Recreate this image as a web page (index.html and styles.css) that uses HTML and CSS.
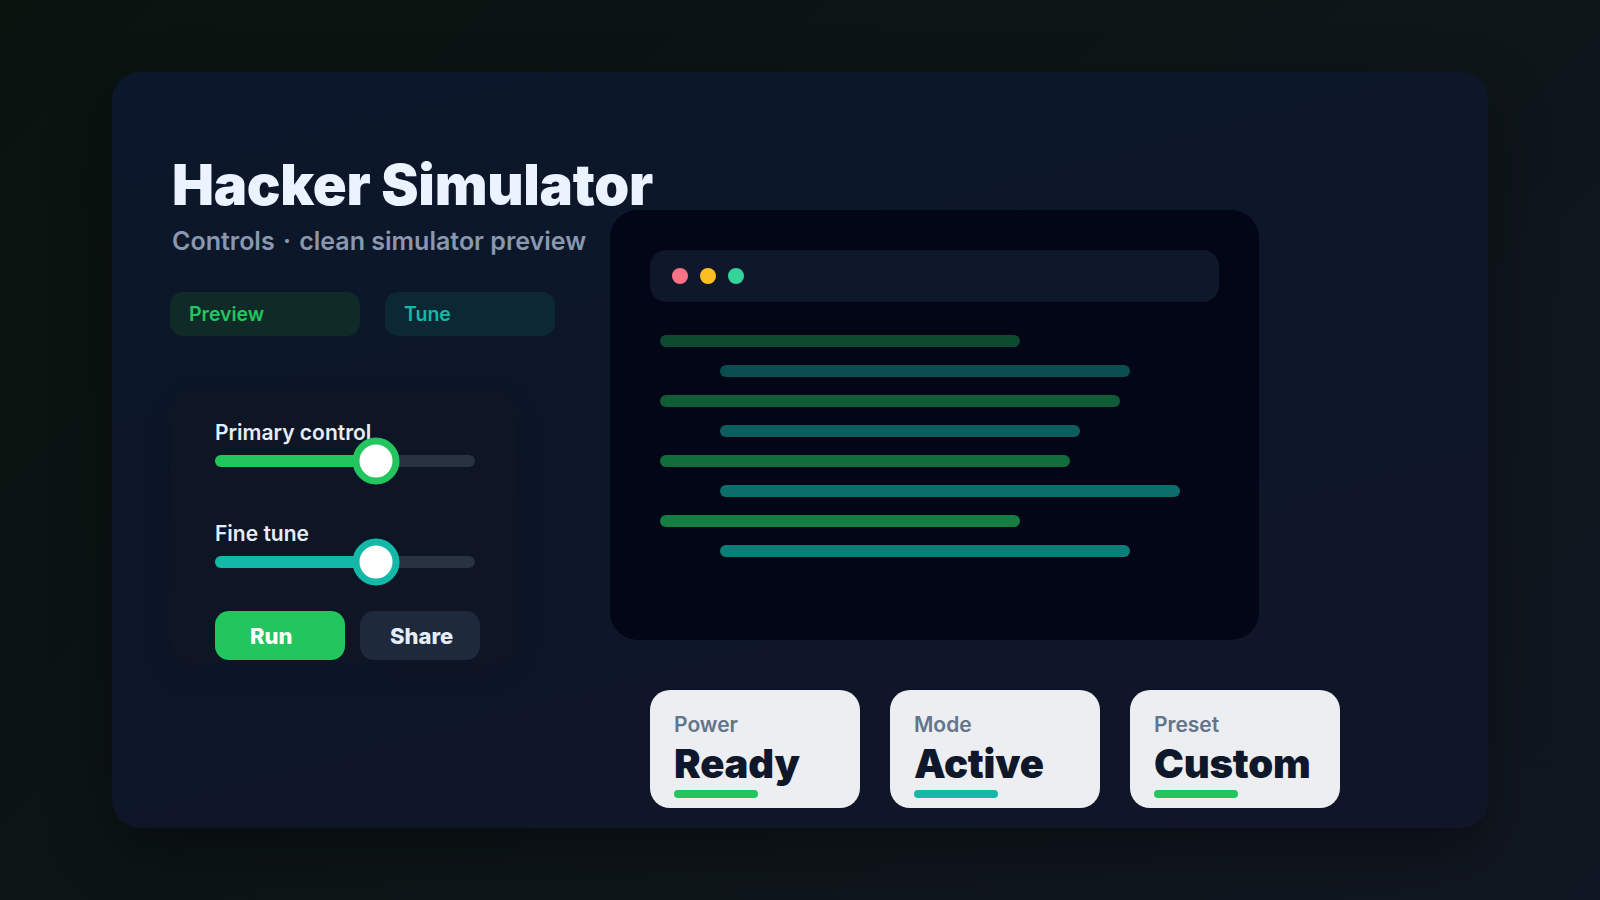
FILE: index.html
```html
<!DOCTYPE html>
<html lang="en">

<head>
    <meta charset="UTF-8" />
    <meta name="viewport" content="width=device-width, initial-scale=1.0" />
    <title>Hacker Simulator</title>
    <link rel="stylesheet" href="styles.css">
</head>

<body>
    <main class="card">
        <!-- Coluna esquerda: título e controles -->
        <section class="left">
            <h1 class="title">Hacker Simulator</h1>
            <p class="subtitle">Controls <span class="sep">·</span> clean simulator preview</p>

            <div class="chips">
                <span class="chip chip-green">Preview</span>
                <span class="chip chip-teal">Tune</span>
            </div>

            <div class="panel">
                <div class="control">
                    <label>Primary control</label>
                    <div class="track green" style="--value: 62%">
                        <span class="fill"></span>
                        <span class="thumb"></span>
                    </div>
                </div>

                <div class="control">
                    <label>Fine tune</label>
                    <div class="track teal" style="--value: 62%">
                        <span class="fill"></span>
                        <span class="thumb"></span>
                    </div>
                </div>

                <div class="actions">
                    <button type="button" class="btn btn-run">Run</button>
                    <button type="button" class="btn btn-share">Share</button>
                </div>
            </div>
        </section>

        <!-- Coluna direita: janela e status -->
        <section class="right">
            <div class="window">
                <div class="titlebar">
                    <span class="dot red"></span>
                    <span class="dot yellow"></span>
                    <span class="dot green"></span>
                </div>
                <div class="code">
                    <span class="line green" style="width: 360px; opacity: 0.36"></span>
                    <span class="line teal indent" style="width: 410px; opacity: 0.405"></span>
                    <span class="line green" style="width: 460px; opacity: 0.45"></span>
                    <span class="line teal indent" style="width: 360px; opacity: 0.495"></span>
                    <span class="line green" style="width: 410px; opacity: 0.54"></span>
                    <span class="line teal indent" style="width: 460px; opacity: 0.585"></span>
                    <span class="line green" style="width: 360px; opacity: 0.63"></span>
                    <span class="line teal indent" style="width: 410px; opacity: 0.675"></span>
                </div>
            </div>

            <div class="stats">
                <div class="stat">
                    <div class="stat-label">Power</div>
                    <div class="stat-value">Ready</div>
                    <div class="stat-bar green"></div>
                </div>
                <div class="stat">
                    <div class="stat-label">Mode</div>
                    <div class="stat-value">Active</div>
                    <div class="stat-bar teal"></div>
                </div>
                <div class="stat">
                    <div class="stat-label">Preset</div>
                    <div class="stat-value">Custom</div>
                    <div class="stat-bar green"></div>
                </div>
            </div>
        </section>
    </main>
</body>

</html>
```

FILE: styles.css
```css
* {
    box-sizing: border-box;
}

body {
    font-family: Inter, "Noto Sans", sans-serif;
    margin: 0;
    width: 1600px;
    height: 900px;
    overflow: hidden;
    padding: 72px 112px;
    background: linear-gradient(135deg, #09130e 0%, #0d1517 50%, #111722 100%);
}

.card {
    width: 1376px;
    height: 756px;
    padding: 85px 58px 0;
    border-radius: 28px;
    background: linear-gradient(165deg, #0b172a 0%, #0d1628 55%, #101627 100%);
    box-shadow: 0 24px 60px rgba(0, 0, 0, 0.35);
    display: grid;
    grid-template-columns: 440px 1fr;
    align-items: start;
}

.title {
    margin: 0;
    padding-left: 2px;
    font-size: 56px;
    line-height: 56px;
    font-weight: 900;
    letter-spacing: -0.005em;
    color: #eaf3ff;
    white-space: nowrap;
}

.subtitle {
    margin: 13px 0 0;
    padding-left: 2px;
    font-size: 25px;
    line-height: 30px;
    font-weight: 600;
    color: #8a97ae;
    white-space: nowrap;
}

.subtitle .sep {
    margin: 0 2px;
}

.chips {
    display: grid;
    grid-template-columns: 190px 170px;
    gap: 25px;
    margin-top: 36px;
}

.chip {
    display: flex;
    align-items: center;
    height: 44px;
    padding-left: 19px;
    border-radius: 13px;
    font-size: 19.5px;
    font-weight: 600;
}

.chip-green {
    background-color: #0f2a27;
    color: #22c55e;
}

.chip-teal {
    background-color: #0c2835;
    color: #14b8a6;
}

.panel {
    width: 347px;
    height: 273px;
    margin-top: 54px;
    padding: 30px 42px 0 45px;
    border-radius: 22px;
    background-color: #0e1524;
    box-shadow: 0 10px 30px rgba(0, 0, 0, 0.12);
}

.control + .control {
    margin-top: 54px;
}

.control label {
    display: block;
    font-size: 21px;
    line-height: 26px;
    font-weight: 600;
    color: #e5edf7;
}

.track {
    position: relative;
    height: 12px;
    margin-top: 9px;
    border-radius: 6px;
    background-color: #293241;
}

.track .fill {
    position: absolute;
    left: 0;
    top: 0;
    height: 100%;
    width: var(--value);
    border-radius: 6px;
}

.track .thumb {
    position: absolute;
    left: var(--value);
    top: 50%;
    width: 47px;
    height: 47px;
    border: 7px solid;
    border-radius: 50%;
    background-color: #ffffff;
    transform: translate(-50%, -50%);
}

.track.green .fill {
    background-color: #22c55e;
}

.track.green .thumb {
    border-color: #22c55e;
}

.track.teal .fill {
    background-color: #14b8a6;
}

.track.teal .thumb {
    border-color: #14b8a6;
}

.actions {
    display: flex;
    gap: 15px;
    margin-top: 43px;
}

.btn {
    flex-shrink: 0;
    height: 49px;
    border: none;
    border-radius: 14px;
    font-family: inherit;
    font-size: 22px;
    font-weight: 800;
    text-align: left;
    cursor: pointer;
}

.btn-run {
    width: 130px;
    padding-left: 35px;
    background-color: #22c55e;
    color: #ffffff;
}

.btn-share {
    width: 120px;
    padding-left: 30px;
    background-color: #1e293b;
    color: #e5edf7;
}

.right {
    padding-top: 53px;
}

.window {
    width: 649px;
    height: 430px;
    padding: 40px;
    border-radius: 28px;
    background-color: #020617;
}

.titlebar {
    display: flex;
    align-items: center;
    gap: 12px;
    height: 52px;
    padding: 0 22px;
    border-radius: 16px;
    background-color: #0f172a;
}

.dot {
    width: 16px;
    height: 16px;
    border-radius: 50%;
}

.dot.red {
    background-color: #fb7185;
}

.dot.yellow {
    background-color: #fbbf24;
}

.dot.green {
    background-color: #34d399;
}

.code {
    display: flex;
    flex-direction: column;
    align-items: flex-start;
    gap: 18px;
    padding: 33px 0 0 10px;
}

.line {
    display: block;
    height: 12px;
    border-radius: 6px;
}

.line.green {
    background-color: #22c55e;
}

.line.teal {
    background-color: #14b8a6;
}

.line.indent {
    margin-left: 60px;
}

.stats {
    display: flex;
    gap: 30px;
    margin: 50px 0 0 40px;
}

.stat {
    width: 210px;
    height: 118px;
    padding: 23px 24px 0;
    border-radius: 20px;
    background-color: #eceef1;
}

.stat-label {
    font-size: 21px;
    line-height: 24px;
    font-weight: 600;
    color: #64748b;
}

.stat-value {
    margin-top: 5px;
    font-size: 40px;
    line-height: 44px;
    font-weight: 900;
    letter-spacing: -0.005em;
    color: #0f172a;
}

.stat-bar {
    width: 84px;
    height: 8px;
    margin-top: 4px;
    border-radius: 4px;
}

.stat-bar.green {
    background-color: #22c55e;
}

.stat-bar.teal {
    background-color: #14b8a6;
}
```
